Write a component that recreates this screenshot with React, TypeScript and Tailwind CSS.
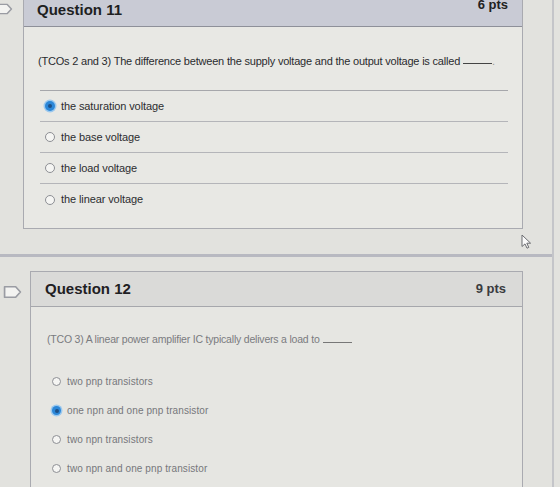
import React from "react";

type Option = { label: string; selected?: boolean };

const q11Options: Option[] = [
  { label: "the saturation voltage", selected: true },
  { label: "the base voltage" },
  { label: "the load voltage" },
  { label: "the linear voltage" },
];

const q12Options: Option[] = [
  { label: "two pnp transistors" },
  { label: "one npn and one pnp transistor", selected: true },
  { label: "two npn transistors" },
  { label: "two npn and one pnp transistor" },
];

function FlagIcon({ className }: { className?: string }) {
  return (
    <svg className={className} viewBox="0 0 18 13" fill="none">
      <path
        d="M1.5 1.5h10.5l4.5 5-4.5 5H1.5z"
        stroke="#9a9ca3"
        strokeWidth="1.6"
        strokeLinejoin="round"
        fill="#f3f3f1"
      />
    </svg>
  );
}

function Radio({ selected, small }: { selected?: boolean; small?: boolean }) {
  const size = small ? "w-[9px] h-[9px]" : "w-[10px] h-[10px]";
  if (selected) {
    return (
      <span
        className={`${size} shrink-0 rounded-full bg-[#2b87d8] flex items-center justify-center shadow-[0_0_0_1.5px_#9cc9ee]`}
      >
        <span className="w-[4px] h-[4px] rounded-full bg-[#1d4f86]" />
      </span>
    );
  }
  return (
    <span
      className={`${size} shrink-0 rounded-full border border-[#8d8f94] bg-[#f5f5f3]`}
    />
  );
}

export default function App() {
  return (
    <div className="w-[560px] h-[487px] overflow-hidden bg-[#e2e2de] flex font-['Liberation_Sans',Arial,sans-serif]">
      <div className="w-[554px] shrink-0 border-r-2 border-[#c4c5c9] flex flex-col">
        {/* Question 11 */}
        <div className="h-[257px] shrink-0 border-b-[3px] border-[#b8b9c1] flex">
          <div className="w-[23px] shrink-0 relative">
            <FlagIcon className="absolute left-[-4px] top-[3px] w-[17px] h-[12px]" />
          </div>
          <div className="w-[500px] h-[229px] border-l border-r border-b border-[#a9aab0] bg-[#e8e8e4] flex flex-col">
            <div className="h-[27px] shrink-0 bg-[#c9cbd5] border-b border-[#8e9099] flex items-start justify-between pl-[13px] pr-[14px]">
              <span className="text-[15px] font-bold leading-[20px] text-[#1e1f22]">Question 11</span>
              <span className="text-[13px] font-bold leading-[13px] mt-[-2px] text-[#222]">6 pts</span>
            </div>
            <div className="px-[14px] pt-[27px]">
              <p className="text-[11px] leading-[14px] text-[#2a2b2e] tracking-[-0.2px] whitespace-nowrap">
                (TCOs 2 and 3) The difference between the supply voltage and the output voltage is called
                <span className="inline-block w-[29px] border-b border-[#444] ml-[3px] translate-y-[-1px]" />
                <span className="text-[#999]">.</span>
              </p>
              <div className="mt-[22px] border-t border-[#a6a7ab] w-[468px] ml-[2px]">
                {q11Options.map((o, i) => (
                  <div
                    key={o.label}
                    className={`h-[31px] flex items-center gap-[6px] pl-[5px] ${
                      i < q11Options.length - 1 ? "border-b border-[#b4b5b9]" : ""
                    }`}
                  >
                    <Radio selected={o.selected} />
                    <span className="text-[11px] text-[#2c2d30] tracking-[-0.1px]">{o.label}</span>
                  </div>
                ))}
              </div>
            </div>
          </div>
        </div>

        {/* Question 12 */}
        <div className="flex pt-[14px]">
          <div className="w-[30px] shrink-0 relative">
            <FlagIcon className="absolute left-[3px] top-[14px] w-[19px] h-[14px]" />
          </div>
          <div className="w-[493px] h-[260px] border-l border-r border-[#a9aab0] border-t bg-[#e6e6e2] flex flex-col">
            <div className="h-[35px] shrink-0 bg-[#dadad8] border-b border-[#a6a7ac] flex items-center justify-between pl-[14px] pr-[16px]">
              <span className="text-[15px] font-bold text-[#1f2023] mt-[1px]">Question 12</span>
              <span className="text-[13px] font-bold text-[#3a3b3f]">9 pts</span>
            </div>
            <div className="pl-[16px] pt-[26px]">
              <p className="text-[10.5px] leading-[13px] text-[#7a7b7f] tracking-[-0.2px] whitespace-nowrap">
                (TCO 3) A linear power amplifier IC typically delivers a load to
                <span className="inline-block w-[29px] border-b border-[#777] ml-[3px]" />
              </p>
              <div className="mt-[21px] pl-[5px]">
                {q12Options.map((o) => (
                  <div key={o.label} className="h-[29px] flex items-center gap-[6px]">
                    <Radio selected={o.selected} small />
                    <span className="text-[10px] text-[#76777b] tracking-[0.1px]">{o.label}</span>
                  </div>
                ))}
              </div>
            </div>
          </div>
        </div>
      </div>

      {/* mouse pointer */}
      <svg
        className="fixed left-[521px] top-[234px] w-[11px] h-[15px]"
        viewBox="0 0 11 15"
      >
        <path d="M1 1v11.5l3-2.6 2 4.3 1.8-.8-2-4.2H9.6z" fill="#fafafa" stroke="#6b6c70" strokeWidth="1" strokeLinejoin="round" />
      </svg>
    </div>
  );
}
